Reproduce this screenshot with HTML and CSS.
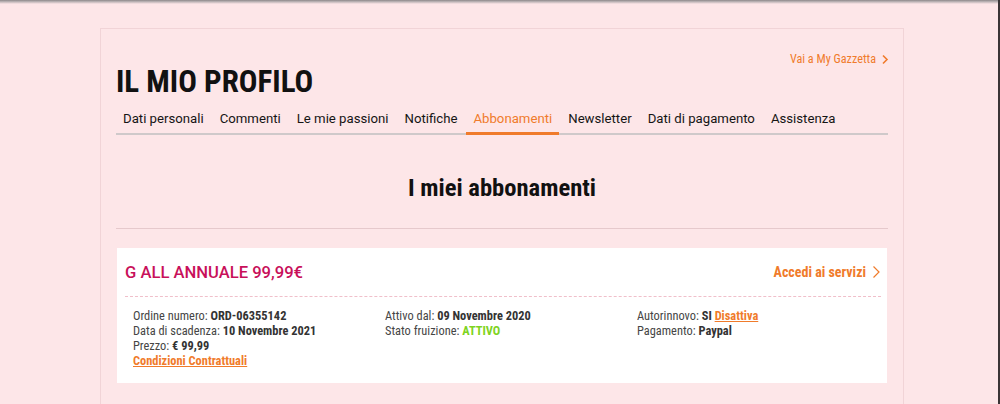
FILE: index.html
```html
<!DOCTYPE html>
<html lang="it">
<head>
<meta charset="utf-8">
<title>Il mio profilo</title>
<link rel="stylesheet" href="styles.css">
</head>
<body>
<div class="topshade"></div>
<main class="profile">
  <div class="toplink-row">
    <a class="toplink" href="#">Vai a My Gazzetta
      <svg class="chev" width="8" height="11" viewBox="0 0 8 11"><path d="M2 1.5 L6 5.5 L2 9.5" fill="none" stroke="currentColor" stroke-width="1.6"/></svg>
    </a>
  </div>
  <h1 class="title">IL MIO PROFILO</h1>
  <nav class="tabs">
    <a class="tab" href="#">Dati personali</a>
    <a class="tab" href="#">Commenti</a>
    <a class="tab" href="#">Le mie passioni</a>
    <a class="tab" href="#">Notifiche</a>
    <a class="tab active" href="#">Abbonamenti</a>
    <a class="tab" href="#">Newsletter</a>
    <a class="tab" href="#">Dati di pagamento</a>
    <a class="tab" href="#">Assistenza</a>
  </nav>
  <h2 class="section-title">I miei abbonamenti</h2>
  <section class="card">
    <div class="card-head">
      <div class="plan">G ALL ANNUALE 99,99€</div>
      <a class="access" href="#">Accedi ai servizi
        <svg class="chev2" width="9" height="14" viewBox="0 0 9 14"><path d="M1.5 1.5 L7 7 L1.5 12.5" fill="none" stroke="currentColor" stroke-width="1.2"/></svg>
      </a>
    </div>
    <div class="details">
      <div class="col">
        <div>Ordine numero: <b>ORD-06355142</b></div>
        <div>Data di scadenza: <b>10 Novembre 2021</b></div>
        <div>Prezzo: <b>€ 99,99</b></div>
        <div><a class="link" href="#">Condizioni Contrattuali</a></div>
      </div>
      <div class="col">
        <div>Attivo dal: <b>09 Novembre 2020</b></div>
        <div>Stato fruizione: <b class="ok">ATTIVO</b></div>
      </div>
      <div class="col">
        <div>Autorinnovo: <b>SI</b> <a class="link" href="#">Disattiva</a></div>
        <div>Pagamento: <b>Paypal</b></div>
      </div>
    </div>
  </section>
</main>
</body>
</html>
```
FILE: styles.css
```css
html, body {
  margin: 0;
  padding: 0;
  height: 100%;
  overflow: hidden;
}
body {
  background: #fde6e8;
  font-family: Roboto, "Liberation Sans", sans-serif;
  color: #111;
  border-right: 2px solid #3a3436;
  box-sizing: border-box;
}
.topshade {
  height: 4px;
  background: linear-gradient(#8d8789, #b9b1b3 40%, rgba(253,230,232,0));
}
.profile {
  margin: 24px 0 0 100px;
  width: 772px;
  padding: 0 15px 40px;
  border: 1px solid #f1d4d7;
  border-bottom: none;
}
.toplink-row {
  display: flex;
  justify-content: flex-end;
  padding-top: 22px;
}
.toplink {
  color: #f07b2b;
  text-decoration: none;
  font-family: "Roboto Condensed", "Liberation Sans Narrow", sans-serif;
  font-size: 12.2px;
  line-height: 16px;
  display: flex;
  align-items: center;
  gap: 5px;
  margin-right: -1px;
}
.title {
  margin: -3px 0 0;
  font-family: "Roboto Condensed", "Liberation Sans Narrow", sans-serif;
  font-weight: 700;
  font-size: 31px;
  line-height: 36px;
  color: #111;
}
.tabs {
  display: flex;
  gap: 2px;
  margin-top: 6px;
  border-bottom: 2px solid #cfc9ca;
}
.tab {
  color: #151515;
  text-decoration: none;
  font-size: 13.2px;
  line-height: 18px;
  padding: 4px 7px 4px;
  border-bottom: 3px solid transparent;
  margin-bottom: -2px;
}
.tab.active {
  color: #f07b2b;
  border-bottom-color: #f07b2b;
}
.section-title {
  margin: 0;
  text-align: center;
  font-family: "Roboto Condensed", "Liberation Sans Narrow", sans-serif;
  font-weight: 700;
  font-size: 24.6px;
  line-height: 30px;
  padding: 38px 0 25px;
  border-bottom: 1px solid #e6c9cc;
  color: #111;
}
.card {
  margin: 19px 1px 0;
  background: #fff;
  padding: 0 6px 15px 8px;
}
.card-head {
  display: flex;
  justify-content: space-between;
  align-items: center;
  height: 48px;
  border-bottom: 1px dashed #f0bfca;
}
.plan {
  color: #c8105a;
  font-size: 16.6px;
  font-weight: 500;
}
.access {
  display: flex;
  align-items: center;
  gap: 6px;
  color: #f07b2b;
  text-decoration: none;
  font-family: "Roboto Condensed", "Liberation Sans Narrow", sans-serif;
  font-weight: 700;
  font-size: 14px;
}
.details {
  display: grid;
  grid-template-columns: 252px 252px 1fr;
  padding: 11px 0 0 8px;
  font-family: "Roboto Condensed", "Liberation Sans Narrow", sans-serif;
  font-size: 12.4px;
  line-height: 15px;
  color: #454545;
}
.details b {
  color: #333;
  font-weight: 700;
}
.details b.ok {
  color: #7ed321;
}
.link {
  color: #f07b2b;
  font-weight: 700;
  text-decoration: underline;
}
```
